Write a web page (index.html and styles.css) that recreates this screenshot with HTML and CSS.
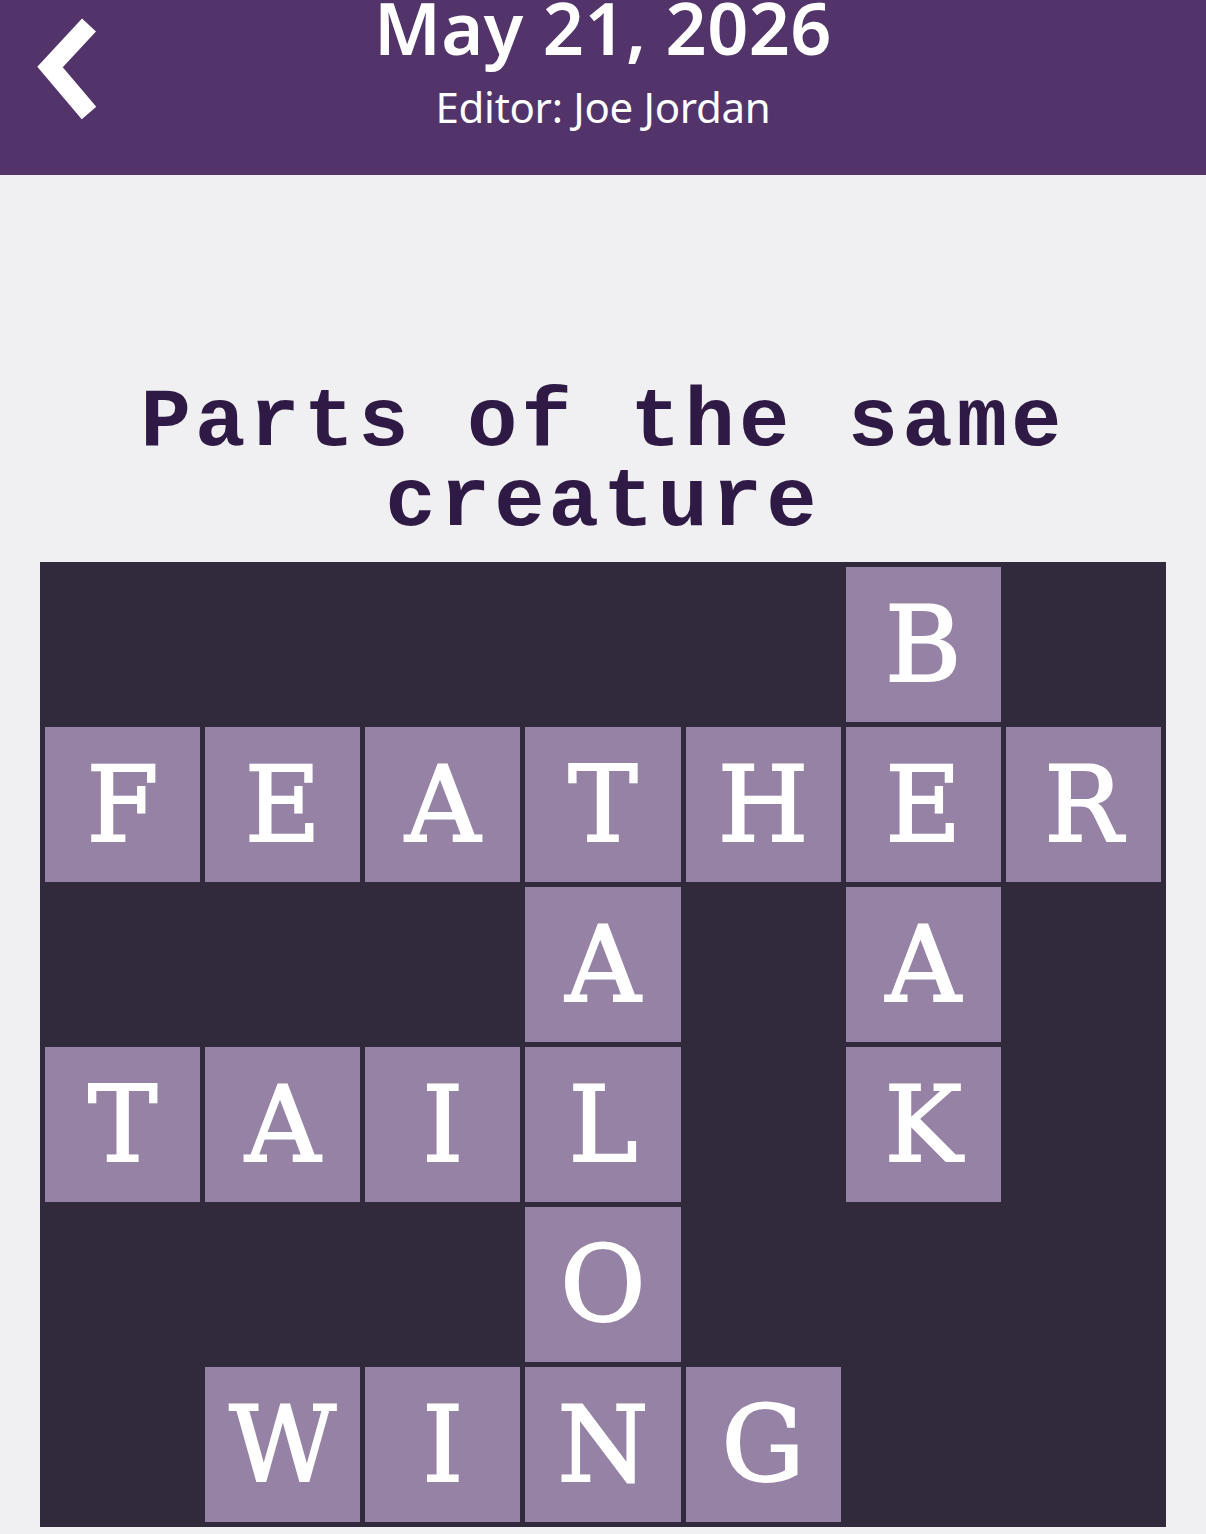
FILE: index.html
```html
<!DOCTYPE html>
<html lang="en">
<head>
<meta charset="utf-8">
<title>May 21, 2026</title>
<link rel="stylesheet" href="styles.css">
</head>
<body>
<header class="topbar">
  <a class="back" href="#" aria-label="Back">
    <svg class="back-icon" viewBox="0 0 70 115" width="70" height="115">
      <path d="M57 15 L18 57 L57 103" fill="none" stroke="#ffffff" stroke-width="19" stroke-linejoin="miter"/>
    </svg>
  </a>
  <div class="heading">
    <div class="date">May 21, 2026</div>
    <div class="editor">Editor: Joe Jordan</div>
  </div>
  <div class="spacer"></div>
</header>
<main class="content">
  <h1 class="clue">Parts of the same creature</h1>
  <div class="board">
    <div class="cell"></div><div class="cell"></div><div class="cell"></div><div class="cell"></div><div class="cell"></div><div class="cell tile">B</div><div class="cell"></div>
    <div class="cell tile">F</div><div class="cell tile">E</div><div class="cell tile">A</div><div class="cell tile">T</div><div class="cell tile">H</div><div class="cell tile">E</div><div class="cell tile">R</div>
    <div class="cell"></div><div class="cell"></div><div class="cell"></div><div class="cell tile">A</div><div class="cell"></div><div class="cell tile">A</div><div class="cell"></div>
    <div class="cell tile">T</div><div class="cell tile">A</div><div class="cell tile">I</div><div class="cell tile">L</div><div class="cell"></div><div class="cell tile">K</div><div class="cell"></div>
    <div class="cell"></div><div class="cell"></div><div class="cell"></div><div class="cell tile">O</div><div class="cell"></div><div class="cell"></div><div class="cell"></div>
    <div class="cell"></div><div class="cell tile">W</div><div class="cell tile">I</div><div class="cell tile">N</div><div class="cell tile">G</div><div class="cell"></div><div class="cell"></div>
  </div>
</main>
</body>
</html>
```

FILE: styles.css
```css
html, body {
  margin: 0;
  padding: 0;
}

body {
  background: #f0f0f2;
  font-family: "Noto Sans", "Liberation Sans", sans-serif;
  overflow: hidden;
}

.topbar {
  background: #52346b;
  height: 175px;
  display: grid;
  grid-template-columns: 1fr auto 1fr;
  color: #ffffff;
}

.back {
  display: block;
  align-self: start;
  justify-self: start;
  margin-left: 32px;
  margin-top: 10px;
  line-height: 0;
}

.back-icon {
  display: block;
}

.heading {
  display: flex;
  flex-direction: column;
  align-items: center;
}

.date {
  font-size: 72px;
  font-weight: 600;
  line-height: 54px;
  letter-spacing: 0.4px;
}

.editor {
  font-size: 42px;
  font-weight: 400;
  line-height: 50px;
  margin-top: 28px;
  letter-spacing: -0.3px;
}

.content {
  padding: 0 40px;
}

.clue {
  margin: 208px 0 19px;
  text-align: center;
  font-family: "Liberation Mono", "DejaVu Sans Mono", monospace;
  font-weight: 700;
  font-size: 84px;
  line-height: 80px;
  letter-spacing: 4px;
  color: #2e1a45;
}

.board {
  background: #312a3d;
  padding: 5px;
  display: grid;
  grid-template-columns: repeat(7, 1fr);
  grid-auto-rows: 155px;
  gap: 5px;
}

.tile {
  background: #9682a5;
  color: #ffffff;
  display: flex;
  align-items: center;
  justify-content: center;
  font-family: "DejaVu Serif", "Liberation Serif", serif;
  font-size: 104px;
  line-height: 1;
  -webkit-text-stroke: 2px #ffffff;
}
```
